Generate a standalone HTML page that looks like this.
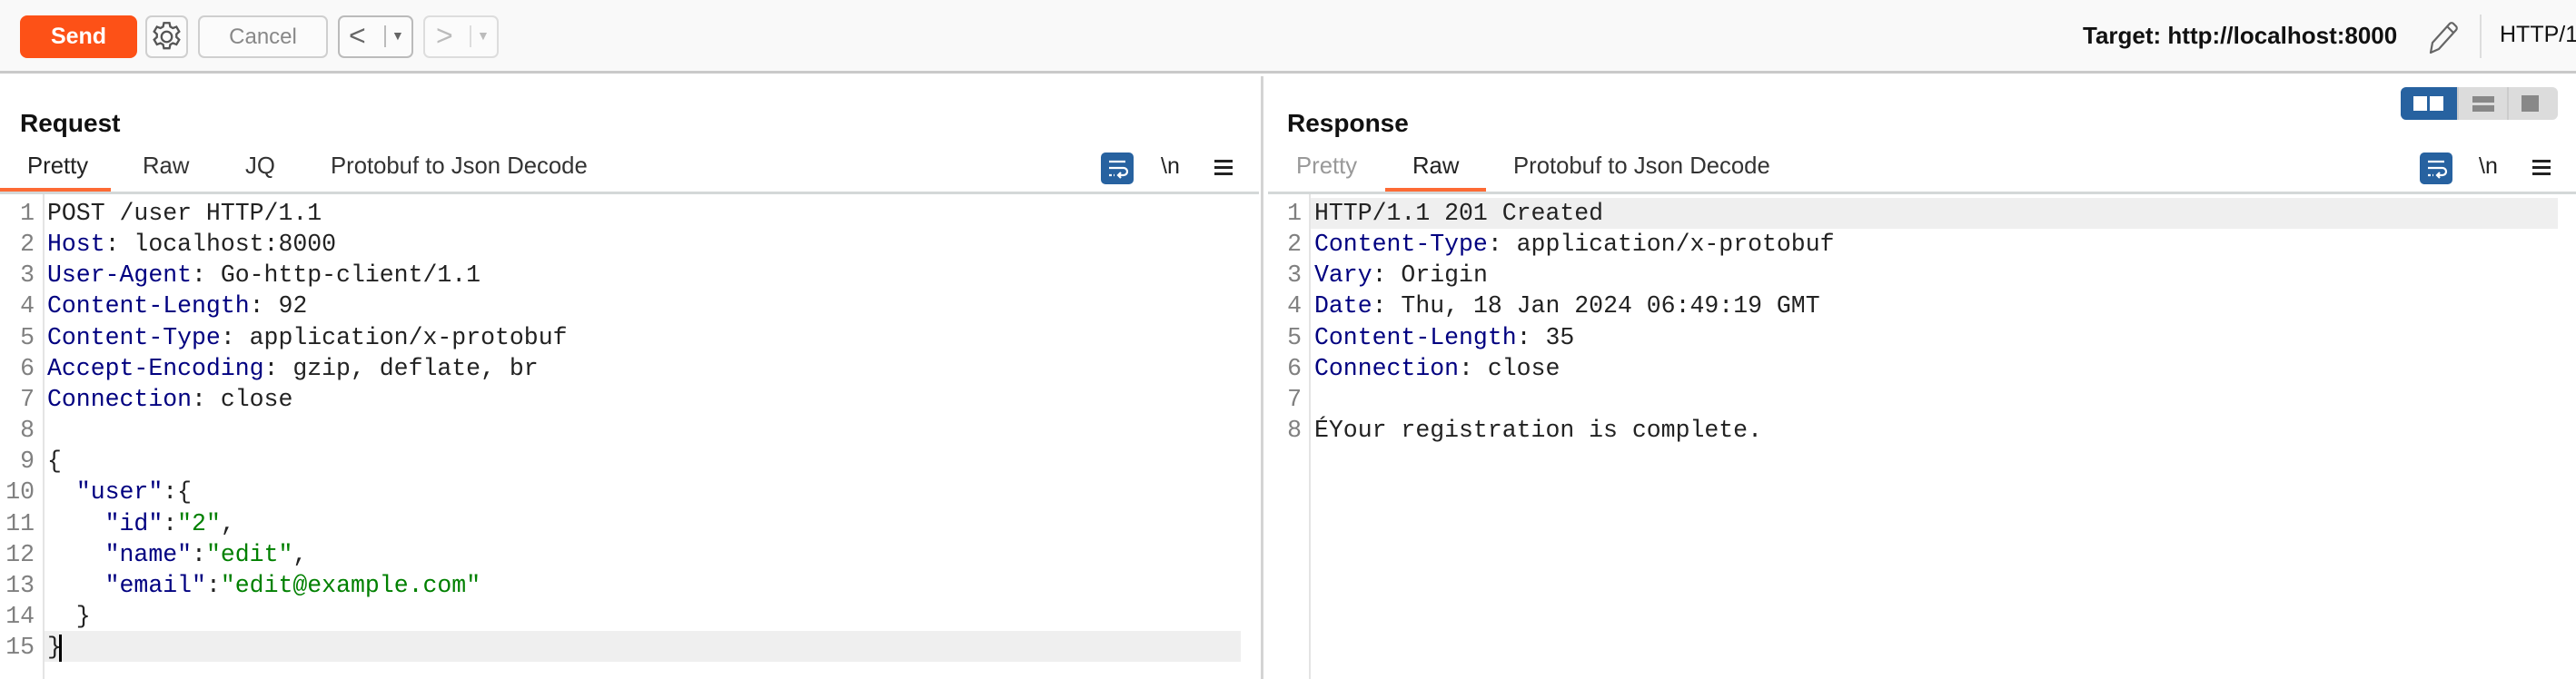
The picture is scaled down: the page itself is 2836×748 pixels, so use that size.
<!DOCTYPE html>
<html><head><meta charset="utf-8"><style>
*{margin:0;padding:0;box-sizing:border-box}
body{width:2836px;height:748px;background:#fff;position:relative;overflow:hidden;font-family:"Liberation Sans",sans-serif;color:#222}
.a{position:absolute}
.tb{left:0;top:0;width:2836px;height:81px;background:#f9f9f9;border-bottom:3px solid #c9c9c9}
.btn{position:absolute;top:17px;height:47px;border:2px solid #cfcfcf;border-radius:7px;background:#fbfbfb}
.code{font-family:"Liberation Mono",monospace;font-size:26.5px;line-height:34.15px;white-space:pre}
.k{color:#000080}.s{color:#008000}
.num{color:#808080;text-align:right}
.tab{position:absolute;top:169px;font-size:25.7px;color:#333}
</style></head><body>
<div class="a tb"></div>
<div class="btn" style="left:22px;width:129px;background:#fd5117;border-color:#fd5117;color:#fff;font-weight:bold;font-size:25px;text-align:center;line-height:43px;border-radius:8px">Send</div>
<div class="btn" style="left:160px;width:47px"><svg width="43" height="43" viewBox="0 0 24 24" style="position:absolute;left:0;top:0"><g fill="none" stroke="#555" stroke-width="1.3"><circle cx="12" cy="12" r="3.2"/><path d="M10.3 3.5h3.4l.5 2.3 1.6.9 2.2-.8 1.7 2.9-1.7 1.6v1.8l1.7 1.6-1.7 2.9-2.2-.8-1.6.9-.5 2.3h-3.4l-.5-2.3-1.6-.9-2.2.8-1.7-2.9 1.7-1.6v-1.8L4.3 8.8 6 5.9l2.2.8 1.6-.9z"/></g></svg></div>
<div class="btn" style="left:218px;width:143px;color:#888;font-size:24px;text-align:center;line-height:43px">Cancel</div>
<div class="btn" style="left:372px;width:83px;border-color:#bbb"><span class="a" style="left:10px;top:2px;font-size:32px;color:#666">&lt;</span><div class="a" style="left:49px;top:9px;width:2px;height:24px;background:#bbb"></div><span class="a" style="left:57px;top:12px;font-size:14px;color:#666">▼</span></div>
<div class="btn" style="left:466px;width:83px;border-color:#ddd"><span class="a" style="left:12px;top:2px;font-size:32px;color:#bbb">&gt;</span><div class="a" style="left:49px;top:9px;width:2px;height:24px;background:#ddd"></div><span class="a" style="left:57px;top:12px;font-size:14px;color:#bbb">▼</span></div>
<div class="a" style="left:2293px;top:24px;font-size:26px;font-weight:bold;color:#111;white-space:nowrap">Target: http://localhost:8000</div>
<svg class="a" style="left:2670px;top:20px" width="38" height="42" viewBox="0 0 38 42"><path d="M6 38l2-11L27 6a3 3 0 0 1 4 0l3 3a3 3 0 0 1 0 4L15 34z M24 9l7 7" fill="none" stroke="#666" stroke-width="2.2" stroke-linejoin="round"/></svg>
<div class="a" style="left:2730px;top:16px;width:2px;height:48px;background:#ddd"></div>
<div class="a" style="left:2752px;top:24px;font-size:25px;color:#111">HTTP/1</div>

<div class="a" style="left:1388px;top:84px;width:3px;height:664px;background:#d4d4d4"></div>

<div class="a" style="left:22px;top:120px;font-size:28px;font-weight:bold;color:#111">Request</div>
<div class="tab" style="left:30px;color:#222">Pretty</div>
<div class="tab" style="left:157px">Raw</div>
<div class="tab" style="left:270px">JQ</div>
<div class="tab" style="left:364px">Protobuf to Json Decode</div>
<div class="a" style="left:0;top:207px;width:122px;height:4px;background:#fd6a34"></div>
<div class="a" style="left:0;top:211px;width:1386px;height:3px;background:#d4d8d8"></div>
<div class="a" style="left:1212px;top:168px;width:36px;height:35px;background:#2762a0;border-radius:5px"><svg width="36" height="35" viewBox="0 0 36 35"><path d="M9 10h18M9 17h16a4 4 0 0 1 0 8h-5M22 22l-3 3 3 3M9 25h3M14 25h1" stroke="#fff" stroke-width="2.2" fill="none"/></svg></div>
<div class="a" style="left:1278px;top:169px;font-size:25px;color:#222">\n</div>
<div class="a" style="left:1337px;top:176px;width:20px;height:3px;background:#222;box-shadow:0 7px 0 #222,0 14px 0 #222"></div>

<div class="a" style="left:47px;top:214px;width:2px;height:534px;background:#e4e4e4"></div>
<div class="a" style="left:49px;top:695px;width:1317px;height:34px;background:#efefef"></div>
<div class="a" style="left:65px;top:699px;width:3px;height:30px;background:#000"></div>
<div class="a code num" style="left:0;top:218px;width:38px">1
2
3
4
5
6
7
8
9
10
11
12
13
14
15</div>
<div class="a code" style="left:52px;top:218px">POST /user HTTP/1.1
<span class="k">Host</span>: localhost:8000
<span class="k">User-Agent</span>: Go-http-client/1.1
<span class="k">Content-Length</span>: 92
<span class="k">Content-Type</span>: application/x-protobuf
<span class="k">Accept-Encoding</span>: gzip, deflate, br
<span class="k">Connection</span>: close

{
  <span class="k">"user"</span>:{
    <span class="k">"id"</span>:<span class="s">"2"</span>,
    <span class="k">"name"</span>:<span class="s">"edit"</span>,
    <span class="k">"email"</span>:<span class="s">"edit@example.com"</span>
  }
}</div>

<div class="a" style="left:1417px;top:120px;font-size:28px;font-weight:bold;color:#111">Response</div>
<div class="a" style="left:2643px;top:96px;width:173px;height:36px;background:#dcdcdc;border-radius:6px;overflow:hidden">
<div class="a" style="left:0;top:0;width:62px;height:36px;background:#2762a0"></div>
<div class="a" style="left:14px;top:10px;width:15px;height:16px;background:#fff"></div><div class="a" style="left:32px;top:10px;width:15px;height:16px;background:#fff"></div>
<div class="a" style="left:62px;top:0;width:2px;height:36px;background:#ccc"></div>
<div class="a" style="left:79px;top:10px;width:24px;height:7px;background:#888"></div><div class="a" style="left:79px;top:20px;width:24px;height:7px;background:#888"></div>
<div class="a" style="left:117px;top:0;width:2px;height:36px;background:#ccc"></div>
<div class="a" style="left:133px;top:9px;width:19px;height:18px;background:#888"></div>
</div>
<div class="tab" style="left:1427px;color:#999">Pretty</div>
<div class="tab" style="left:1555px;color:#222">Raw</div>
<div class="tab" style="left:1666px">Protobuf to Json Decode</div>
<div class="a" style="left:1525px;top:207px;width:111px;height:4px;background:#fd6a34"></div>
<div class="a" style="left:1396px;top:211px;width:1440px;height:3px;background:#d4d8d8"></div>
<div class="a" style="left:2664px;top:168px;width:36px;height:35px;background:#2762a0;border-radius:5px"><svg width="36" height="35" viewBox="0 0 36 35"><path d="M9 10h18M9 17h16a4 4 0 0 1 0 8h-5M22 22l-3 3 3 3M9 25h3M14 25h1" stroke="#fff" stroke-width="2.2" fill="none"/></svg></div>
<div class="a" style="left:2729px;top:169px;font-size:25px;color:#222">\n</div>
<div class="a" style="left:2788px;top:176px;width:20px;height:3px;background:#222;box-shadow:0 7px 0 #222,0 14px 0 #222"></div>

<div class="a" style="left:1441px;top:214px;width:2px;height:534px;background:#e4e4e4"></div>
<div class="a" style="left:1443px;top:218px;width:1373px;height:34px;background:#efefef"></div>
<div class="a code num" style="left:1400px;top:218px;width:33px">1
2
3
4
5
6
7
8</div>
<div class="a code" style="left:1447px;top:218px">HTTP/1.1 201 Created
<span class="k">Content-Type</span>: application/x-protobuf
<span class="k">Vary</span>: Origin
<span class="k">Date</span>: Thu, 18 Jan 2024 06:49:19 GMT
<span class="k">Content-Length</span>: 35
<span class="k">Connection</span>: close

ÉYour registration is complete.</div>
</body></html>
